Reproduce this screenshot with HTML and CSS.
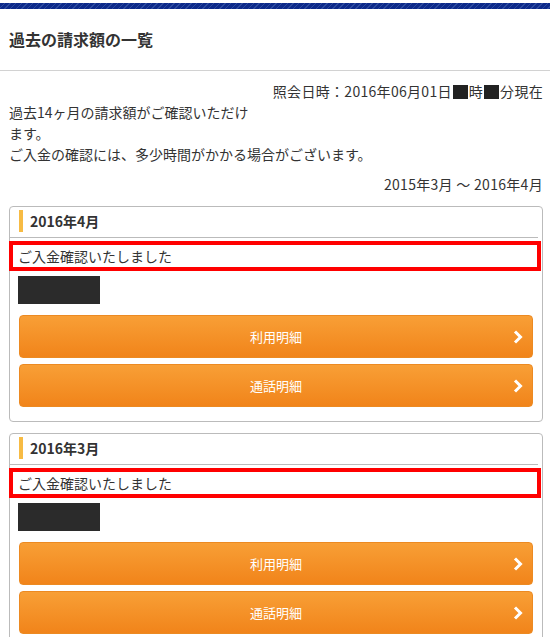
FILE: index.html
```html
<!DOCTYPE html>
<html lang="ja">
<head>
    <meta charset="UTF-8">
    <meta name="viewport" content="width=device-width, initial-scale=1.0">
    <title>過去の請求額の一覧</title>
    <link rel="stylesheet" href="styles.css">
</head>
<body>
    <div class="top-bar"></div>
    <header class="page-title">
        <h1>過去の請求額の一覧</h1>
    </header>
    <div class="content">
        <p class="query-date">照会日時：2016年06月01日<span class="mask"></span>時<span class="mask"></span>分現在</p>
        <p class="lead">過去14ヶ月の請求額がご確認いただけます。</p>
        <p class="note">ご入金の確認には、多少時間がかかる場合がございます。</p>
        <p class="range">2015年3月 ～ 2016年4月</p>

        <div class="bill-card">
            <h2 class="bill-month">2016年4月</h2>
            <div class="paid-status">ご入金確認いたしました</div>
            <div class="amount-mask"></div>
            <a href="#" class="detail-button">利用明細
                <svg class="chevron" width="10" height="14" viewBox="0 0 10 14"><polyline points="2,1.5 7.5,7 2,12.5" fill="none" stroke="#fff" stroke-width="3"/></svg>
            </a>
            <a href="#" class="detail-button">通話明細
                <svg class="chevron" width="10" height="14" viewBox="0 0 10 14"><polyline points="2,1.5 7.5,7 2,12.5" fill="none" stroke="#fff" stroke-width="3"/></svg>
            </a>
        </div>

        <div class="bill-card">
            <h2 class="bill-month">2016年3月</h2>
            <div class="paid-status">ご入金確認いたしました</div>
            <div class="amount-mask"></div>
            <a href="#" class="detail-button">利用明細
                <svg class="chevron" width="10" height="14" viewBox="0 0 10 14"><polyline points="2,1.5 7.5,7 2,12.5" fill="none" stroke="#fff" stroke-width="3"/></svg>
            </a>
            <a href="#" class="detail-button">通話明細
                <svg class="chevron" width="10" height="14" viewBox="0 0 10 14"><polyline points="2,1.5 7.5,7 2,12.5" fill="none" stroke="#fff" stroke-width="3"/></svg>
            </a>
        </div>
    </div>
</body>
</html>
```

FILE: styles.css
```css
body {
    font-family: "Noto Sans CJK JP", "Noto Sans", sans-serif;
    background-color: #fff;
    margin: 0;
    padding: 3px 0 0;
    color: #333;
    font-size: 14px;
    line-height: 21px;
}
p {
    margin: 0;
}
.top-bar {
    height: 6px;
    background-color: #0d2a8a;
    background-image: repeating-linear-gradient(135deg, #0d2a8a 0, #0d2a8a 3px, #2c4a9e 3px, #2c4a9e 4px);
}
.page-title {
    border-bottom: 1px solid #d2d2d2;
    padding: 0 9px;
    height: 61px;
    display: flex;
    align-items: center;
}
.page-title h1 {
    margin: 0;
    font-size: 16px;
    font-weight: bold;
    color: #333;
}
.content {
    padding: 10px 7px 20px 9px;
}
.query-date {
    text-align: right;
    letter-spacing: 0.3px;
}
.mask {
    display: inline-block;
    width: 15px;
    height: 14px;
    background-color: #222;
    vertical-align: -2px;
    margin: 0 1px;
}
.lead {
    width: 245px;
}
.range {
    text-align: right;
    margin-top: 9px;
    margin-bottom: 11px;
    letter-spacing: 0.3px;
}
.bill-card {
    border: 1px solid #bbb;
    border-radius: 4px;
    padding: 3px 0 14px;
    margin-bottom: 11px;
}
.bill-month {
    margin: 0 4px 0 0;
    padding: 0 0 5px 9px;
    border-bottom: 1px solid #bbb;
    display: flex;
    align-items: center;
    gap: 7px;
    font-size: 14px;
    font-weight: bold;
    line-height: 22px;
}
.bill-month::before {
    content: "";
    width: 4px;
    height: 22px;
    background-color: #f7bb44;
}
.paid-status {
    margin: 3px 1px 0 -1px;
    border: 4px solid #f00;
    padding: 0 5px;
    height: 22px;
    line-height: 22px;
}
.amount-mask {
    width: 82px;
    height: 28px;
    background-color: #2b2b2b;
    margin: 5px 0 0 8px;
}
.detail-button {
    position: relative;
    display: block;
    margin: 11px 9px 0;
    height: 41px;
    line-height: 41px;
    border: 1px solid #ec8a22;
    border-radius: 4px;
    background: linear-gradient(#f89f36, #f1841a);
    color: #fff;
    text-align: center;
    font-size: 13px;
    text-decoration: none;
}
.detail-button + .detail-button {
    margin-top: 6px;
}
.chevron {
    position: absolute;
    right: 9px;
    top: 14px;
}
```
